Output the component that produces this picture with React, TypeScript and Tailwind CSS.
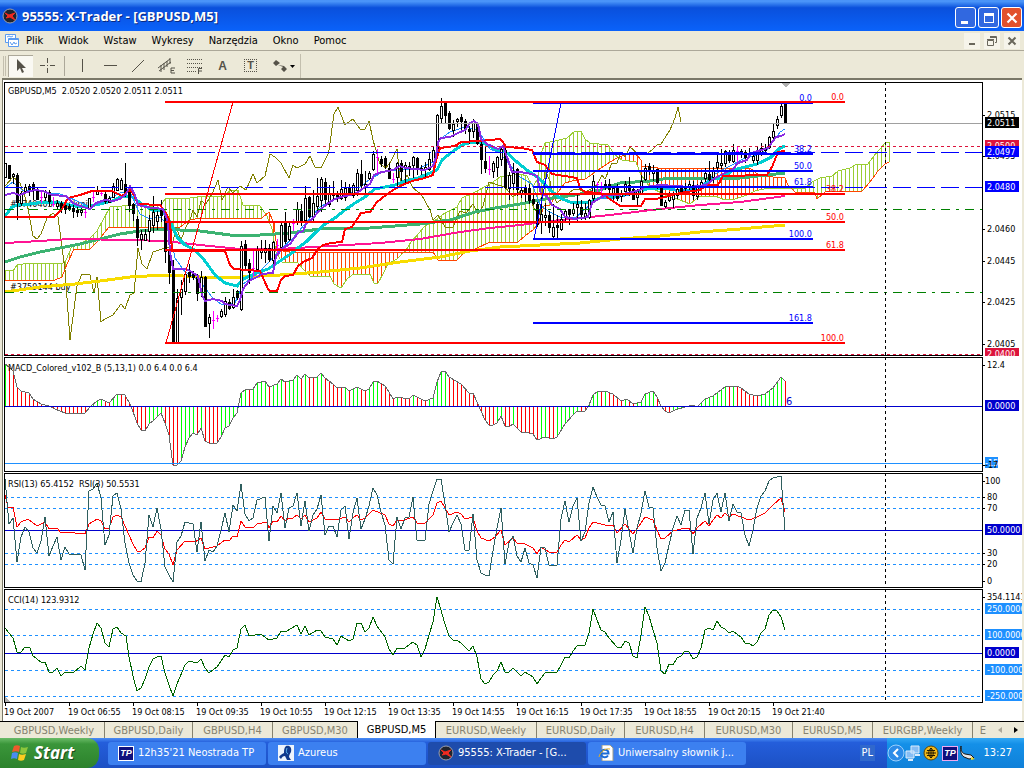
import React from "react";

const CANDLES = `163,163,177,177,w 165,165,178,178,b 173,174,176,183,w 173,175,202,219,b 191,193,203,205,w 184,187,191,193,w 184,186,189,195,b 182,184,190,199,b 187,190,199,199,b 190,197,197,202,m
190,191,197,200,w 190,192,201,205,b 197,204,204,206,m 200,203,206,209,w 201,203,209,212,b 203,205,209,213,b 204,206,209,210,b 205,208,211,217,b 207,210,212,216,b 208,210,212,215,w
210,212,212,217,m 198,198,209,209,w 190,197,197,201,m 186,190,194,194,w 191,193,193,195,m 191,194,201,203,b 196,198,202,202,w 183,186,197,197,w 178,179,190,190,w 178,180,189,189,w
163,184,194,196,b 189,192,205,211,b 203,204,213,220,b 216,219,237,245,b 230,234,239,249,w 229,234,240,240,w 215,220,231,241,w 196,212,225,232,w 211,215,221,229,w 200,208,215,221,b
212,215,251,262,b 250,251,272,283,b 260,270,341,343,b 289,298,343,343,w 280,289,297,314,w 272,274,291,294,w 264,272,276,282,b 271,273,277,279,b 274,277,293,300,b 271,277,292,296,w
276,277,326,326,b 314,317,323,337,w 311,320,320,328,m 315,318,318,321,m 309,311,316,317,w 297,301,314,316,w 299,302,308,309,b 289,297,307,308,w 290,291,297,299,b 241,246,309,310,w
240,244,265,269,b 259,263,272,283,b 251,268,268,276,m 246,250,269,270,w 240,249,252,258,w 240,248,252,262,w 244,248,259,261,b 241,242,260,265,w 239,245,245,255,m 222,225,247,248,w
212,223,241,243,b 223,226,239,240,w 219,223,223,230,m 202,209,222,224,w 204,211,221,225,b 186,198,220,222,w 196,197,216,217,b 190,203,217,220,w 178,196,206,212,w 177,179,200,211,w
178,182,199,203,b 185,194,204,206,w 181,193,195,200,w 191,195,196,201,b 180,189,198,199,w 182,188,197,200,w 184,187,195,195,b 183,185,195,197,w 169,173,190,195,w 160,174,185,188,b
171,184,187,192,w 171,173,178,179,w 151,154,169,170,w 149,157,157,172,m 156,159,163,166,b 156,158,165,168,b 163,168,178,178,b 173,179,179,182,m 162,163,177,187,w 160,163,171,180,b
162,165,168,182,w 162,166,168,175,w 156,157,165,177,w 157,158,169,174,b 165,168,169,174,w 162,167,169,178,w 153,159,169,170,w 146,150,161,165,w 114,115,148,150,w 98,106,118,123,w
101,102,115,122,b 111,113,128,129,b 120,124,130,136,w 118,119,121,126,w 114,117,121,129,b 119,121,129,133,b 126,129,131,143,b 119,121,131,137,w 122,123,143,144,b 138,144,159,173,b
147,161,168,172,b 156,169,169,174,m 161,163,171,177,w 156,157,167,176,w 147,149,159,165,w 148,150,187,188,b 172,175,188,199,w 163,173,183,189,w 168,169,189,195,b 187,190,194,197,w
185,188,192,201,b 184,188,200,203,b 195,199,203,204,b 202,204,224,226,b 197,214,221,233,w 203,215,217,225,w 211,215,227,232,b 204,227,236,239,w 215,225,227,237,b 214,219,229,230,w
210,211,217,222,w 209,209,214,224,b 203,209,213,215,w 195,204,207,222,w 200,207,214,219,b 203,213,217,219,w 199,200,217,218,w 175,181,198,200,w 182,184,184,194,m 182,188,188,195,m
180,184,187,189,b 179,184,189,193,b 186,188,193,199,w 184,188,198,200,b 190,194,196,201,w 181,184,191,195,w 177,185,190,195,b 187,189,199,199,b 189,190,197,205,w 175,181,193,194,w
164,168,179,180,w 163,166,171,174,b 165,170,173,180,w 169,169,182,188,b 184,185,205,205,b 200,202,206,207,w 192,196,200,201,w 192,194,199,207,w 186,189,195,198,w 185,188,191,193,b
183,186,188,190,w 181,184,187,189,w 181,185,195,199,b 184,187,196,199,w 180,182,188,189,w 168,173,178,181,w 161,174,179,180,b 167,170,177,182,w 154,162,167,169,w 149,163,165,168,w
150,151,163,166,w 150,152,160,162,b 144,150,161,162,w 147,151,151,162,m 149,151,152,157,w 150,152,157,162,b 148,153,155,156,b 151,156,160,162,w 146,151,160,164,w 143,148,152,155,w
144,148,150,153,w 136,137,147,148,w 123,131,137,140,w 116,119,125,128,w 104,106,115,117,w 103,103,123,123,b`;

const SPAN_A =
  "5,270 13,271 17,265 30,263 62,264 66,260 72,246 80,244 90,238 97,231 103,220 110,207 135,205 150,207 162,204 165,199 190,198 205,196 225,196 230,190 238,190 243,205 260,206 267,216 272,229 276,252 282,262 297,262 304,270 311,277 330,276 334,284 341,288 347,279 352,275 370,274 374,283 378,283 383,274 388,264 397,259 406,250 411,242 419,233 425,226 437,219 445,213 457,207 462,198 475,192 490,184 500,177 512,175 520,174 527,176 533,187 538,178 541,154 545,143 555,141 567,138 575,131 581,131 585,139 590,143 608,145 615,155 622,160 636,162 641,175 650,187 665,195 680,200 690,204 700,196 715,196 725,200 735,199 747,195 755,191 768,188 785,188 795,189 805,188 812,182 820,178 832,176 838,171 850,168 855,165 868,164 873,157 880,149 885,143 889,142";
const SPAN_B =
  "5,280 55,280 62,277 67,264 74,249 90,249 97,242 109,227 180,227 190,220 200,218 262,218 269,212 274,223 277,250 290,252 433,252 438,260 457,260 464,253 475,249 490,242 518,242 525,236 533,230 538,224 544,206 550,205 558,192 565,183 572,181 585,179 590,176 598,170 607,164 615,159 627,154 635,153 641,160 642,166 658,168 750,168 755,172 760,176 785,178 788,185 795,192 815,193 817,199 825,192 862,191 870,182 878,171 885,164 889,162";

const CHIKOU =
  "5,186 13,177 20,183 27,203 33,236 37,239 41,234 47,218 53,213 58,217 65,270 70,340 77,286 82,274 90,275 94,293 97,277 101,322 105,319 113,315 121,304 125,309 130,295 134,293 138,248 142,264 147,269 153,252 162,249 172,247 176,227 181,240 186,227 190,220 193,210 197,217 201,201 206,204 212,194 218,180 222,200 228,187 233,193 240,186 246,190 253,174 257,183 265,176 270,154 275,157 281,163 289,178 293,165 297,168 305,164 310,156 315,167 321,168 328,154 329,150 334,114 338,107 345,125 353,119 360,129 365,129 369,121 373,140 380,164 386,168 391,161 397,149 401,187 407,175 413,188 421,194 430,210 433,220 438,215 445,227 453,227 460,211 466,213 473,204 478,214 483,206 489,182 495,184 505,187 513,197 522,190 528,194 535,210 540,215 545,170 550,181 553,195 557,203 565,196 573,190 577,189 585,192 593,188 597,185 602,175 605,179 612,163 617,163 621,152 625,157 630,147 637,153 645,155 652,150 657,145 661,144 670,130 675,118 678,107 681,122";

// moving averages, drawn from back to front
const AVERAGES = [
  { color: "#f8dc00", width: 3, points: "5,292 40,287 75,284 100,281 130,277 165,275 200,277 240,277 280,275 320,272 360,268 400,262 440,257 470,251 500,247 540,245 580,243 620,239 660,236 700,232 740,229 785,225" },
  { color: "#3cb371", width: 3, points: "5,262 20,257 40,252 60,248 80,244 100,239 120,234 140,231 160,229 200,231 230,235 260,235 290,233 320,229 370,228 420,224 450,220 475,212 495,208 520,204 545,199 575,195 600,190 620,183 650,181 670,178 740,178 785,173" },
  { color: "#ff1493", width: 2, points: "5,243 40,241 70,239 130,240 165,241 200,245 240,249 280,249 330,246 380,243 420,239 460,232 490,228 520,225 560,220 610,215 660,209 700,205 740,202 785,196" },
  { color: "#00ced1", width: 3, points: "5,216 12,207 22,204 30,204 45,202 60,203 75,206 85,207 100,204 112,201 122,196 132,197 142,204 152,210 160,211 166,215 172,225 177,237 185,245 195,250 205,261 215,275 225,283 237,286 243,279 257,273 268,269 280,261 292,253 298,248 306,242 315,233 325,224 335,218 345,210 355,203 365,197 375,189 385,187 395,185 405,181 418,178 430,173 437,170 442,160 452,152 462,145 472,142 478,142 485,144 495,149 507,153 517,162 528,171 536,176 543,182 550,190 560,198 570,202 580,203 590,202 600,198 615,196 628,194 640,191 650,188 665,188 675,190 690,190 700,188 710,181 715,178 722,178 733,170 745,167 757,164 770,158 780,148 785,146" },
  { color: "#1e90ff", width: 1, points: "5,188 13,182 22,190 32,190 50,193 60,194 75,200 90,207 105,201 120,193 130,192 140,214 150,219 160,217 168,225 175,258 185,272 200,281 212,297 222,305 235,303 243,284 257,274 268,263 280,250 293,238 305,224 320,207 340,196 355,191 370,179 385,171 400,170 420,168 433,162 440,139 450,132 465,127 478,130 490,149 500,153 508,163 520,177 532,184 540,205 548,211 560,217 575,218 590,205 600,198 615,198 630,195 645,187 660,187 675,190 690,190 700,187 715,174 730,166 745,158 757,155 768,149 780,132 785,129" },
  { color: "#ff0000", width: 2, points: "5,217 54,217 62,209 68,198 80,195 92,191 112,191 122,196 130,190 134,195 138,204 160,205 166,213 170,222 172,251 225,251 230,265 234,269 260,271 268,289 270,291 277,291 281,280 285,276 293,275 298,266 303,262 312,258 318,249 323,245 331,243 342,242 345,229 352,227 361,213 370,212 377,202 390,192 400,186 412,181 425,178 433,175 436,160 440,148 455,146 461,142 480,141 500,139 503,142 506,147 521,148 532,150 537,162 545,165 552,174 577,178 580,188 585,192 600,193 610,199 620,206 641,206 645,199 656,199 665,197 680,193 700,190 707,185 718,185 723,176 767,175 772,167 778,152 785,151" },
  { color: "#8a2be2", width: 2, points: "5,195 13,193 20,195 27,192 35,190 43,191 52,195 66,196 73,203 80,206 90,209 96,203 105,200 113,201 120,199 126,194 130,186 135,195 138,205 146,207 163,209 168,222 170,252 173,269 185,269 190,271 198,276 202,295 205,301 213,299 222,301 225,304 237,306 240,300 243,289 249,281 257,277 262,274 273,273 276,256 283,248 290,244 298,233 303,231 306,224 313,218 320,210 327,204 333,200 341,197 350,195 357,193 365,187 370,184 374,175 382,172 393,170 400,166 405,168 425,170 433,166 436,157 438,142 441,138 450,137 458,133 465,130 470,123 474,121 478,124 481,139 487,144 498,149 503,146 508,160 512,172 520,172 532,174 537,176 541,194 547,196 552,205 560,209 565,217 575,219 588,217 592,203 600,198 607,195 618,195 628,193 640,190 645,187 660,185 690,187 706,185 715,178 725,173 733,169 738,163 747,160 751,153 758,151 768,148 776,137 781,136 785,134" },
];

const MACD =
  "5,364 9,367 13,371 17,387 21,391 29,393 33,399 41,404 49,406 55,409 65,413 85,413 90,407 97,401 101,399 109,403 117,394 125,395 131,406 137,423 141,430 145,431 149,424 153,421 161,413 165,423 169,435 173,465 177,465 181,461 185,447 189,438 193,433 197,435 201,428 205,441 209,443 217,443 221,437 225,428 229,426 233,418 237,413 241,393 245,390 253,389 257,383 265,381 269,387 277,384 281,379 285,382 293,380 297,375 301,379 305,374 309,378 317,377 321,373 325,378 333,384 337,388 345,387 349,391 357,387 365,391 369,389 373,382 377,381 385,386 389,392 393,399 397,397 409,399 413,395 425,401 433,398 437,382 441,372 445,371 449,377 461,384 469,393 473,393 477,402 485,420 489,425 493,425 497,423 501,416 505,426 509,427 513,424 521,432 525,432 533,434 537,440 545,437 553,439 557,437 565,424 573,415 577,411 585,411 589,405 593,395 597,392 605,391 613,394 621,401 627,399 633,404 641,402 645,394 653,391 657,397 661,406 665,411 669,413 675,410 685,407 693,405 697,407 705,399 713,396 721,390 725,387 737,386 741,388 749,394 757,396 765,394 773,388 781,377 785,381";
const RSI_FAST =
  "5,479 9,524 13,518 17,562 21,537 25,527 29,532 33,548 37,553 41,541 45,517 49,556 53,546 57,537 61,560 65,547 69,554 81,555 85,570 89,491 93,489 97,483 101,498 105,545 109,535 113,496 117,493 121,509 125,543 129,563 133,575 137,581 141,582 145,563 149,515 153,527 157,508 161,529 165,567 169,575 173,582 177,542 181,536 185,522 193,524 197,552 201,522 205,561 209,550 213,552 217,546 221,530 225,513 229,532 233,505 237,511 241,484 245,514 249,521 253,518 257,500 265,497 269,541 273,506 277,513 281,493 285,528 289,508 293,506 297,493 301,526 305,501 309,531 313,515 317,509 321,495 325,535 329,526 333,526 337,537 341,510 345,506 349,539 353,513 357,498 361,529 365,519 369,506 373,488 377,495 381,512 385,525 389,560 393,564 397,517 401,529 405,518 409,517 413,497 417,540 425,540 429,504 433,491 437,479 441,479 445,504 449,532 453,523 457,515 461,524 465,550 469,550 473,514 477,560 481,573 485,575 489,576 493,551 497,528 501,508 505,564 509,543 513,536 517,556 521,562 525,548 529,563 533,565 537,578 541,547 545,548 549,565 557,565 561,519 565,501 569,522 573,506 577,498 581,541 585,532 589,503 593,487 597,497 601,505 605,506 609,522 613,512 617,563 621,540 625,509 629,531 633,553 637,528 641,513 645,491 649,507 653,508 657,548 661,571 665,563 669,545 673,528 677,516 681,525 685,510 689,510 693,554 697,518 701,508 705,493 709,524 713,500 717,493 721,512 725,493 729,521 733,504 737,512 741,513 745,535 749,546 753,530 757,508 761,496 765,491 769,481 773,478 777,477 781,476 785,530";
const RSI_SLOW =
  "5,495 8,507 13,507 17,527 21,522 28,519 37,526 45,522 49,529 57,528 61,533 65,532 85,534 89,524 97,519 101,521 105,529 109,528 113,517 117,515 121,517 125,526 133,544 137,551 141,551 145,548 149,537 153,538 157,531 161,535 165,549 169,554 173,565 177,550 185,541 195,542 201,538 205,549 217,546 225,540 229,541 233,536 237,537 241,521 245,527 253,528 257,524 267,522 269,528 273,521 277,522 281,516 285,521 289,518 293,518 297,515 301,519 305,515 309,522 317,518 321,512 325,519 337,520 345,517 349,522 353,518 357,515 361,520 365,518 373,510 385,515 389,524 393,526 397,520 401,521 413,517 417,523 425,523 433,515 437,503 441,501 449,515 457,512 461,514 465,519 473,517 477,531 481,538 489,541 495,537 501,530 505,545 513,538 517,543 525,544 533,548 537,554 541,547 549,552 557,552 561,545 565,540 569,542 577,535 581,540 585,538 589,528 593,522 605,525 613,525 617,533 625,524 633,534 641,523 645,517 653,520 657,530 661,539 665,538 673,531 681,529 689,528 693,534 697,528 705,521 709,526 713,520 717,515 721,518 725,513 729,517 733,514 741,517 749,520 757,517 765,513 773,505 781,498 785,512";
const CCI =
  "5,628 13,638 17,652 21,652 25,647 30,648 33,656 41,662 45,662 49,672 53,672 57,668 61,676 65,672 73,673 81,666 85,670 89,648 93,634 97,623 101,628 105,643 109,647 113,629 117,627 121,633 126,636 129,657 133,676 137,691 141,688 145,679 149,667 153,659 157,657 161,656 165,673 169,685 173,696 177,684 185,665 189,661 197,663 201,659 205,668 209,673 217,667 225,655 229,657 233,650 237,648 241,629 245,625 249,636 261,634 269,640 277,638 281,631 285,632 297,625 301,634 305,626 309,635 317,630 321,631 325,637 333,639 337,645 341,636 349,641 353,639 357,623 361,623 365,632 369,628 373,617 377,626 385,637 389,649 393,655 397,648 405,648 413,642 417,645 421,657 425,649 429,635 433,622 437,597 441,610 445,624 449,636 453,640 457,640 461,643 469,651 473,646 477,657 481,679 485,684 489,682 493,675 497,671 501,662 505,672 509,672 513,668 521,676 525,672 533,677 537,684 541,678 545,673 557,672 561,665 565,657 569,658 573,651 577,646 585,645 589,633 593,609 597,620 601,630 605,632 609,638 617,647 621,648 625,641 629,643 633,656 637,658 641,635 645,607 649,616 653,630 657,643 661,671 665,674 669,664 673,665 677,658 681,656 685,651 689,652 693,659 697,657 701,648 705,630 709,628 713,630 717,621 721,627 725,629 729,633 733,631 741,637 745,643 749,643 753,646 757,642 761,633 765,629 769,615 773,610 777,611 781,617 785,630";

const candles = CANDLES.split(/\s+/).map((c) => {
  const [high, top, bottom, low, kind] = c.split(",");
  return { high: +high, top: +top, bottom: +bottom, low: +low, kind };
});

// value of a polyline every 4px, one per bar
const sample = (points: string, end: number) => {
  const list = points.split(" ").map((p) => p.split(",").map(Number));
  const out: number[][] = [];
  for (let x = 5; x <= end; x += 4) {
    let i = 1;
    while (i < list.length - 1 && list[i][0] < x) i++;
    const [x1, y1] = list[i - 1];
    const [x2, y2] = list[i];
    out.push([x, Math.round(y1 + ((y2 - y1) * (x - x1)) / (x2 - x1))]);
  }
  return out;
};

const spanA = sample(SPAN_A, 889);
const spanB = sample(SPAN_B, 889);
const macdBars = sample(MACD, 785);

const redFib = [
  [102, "0.0"],
  [194, "38.2"],
  [222, "50.0"],
  [250, "61.8"],
  [343, "100.0"],
] as const;
const blueFib = [
  [103, "0.0"],
  [154, "38.2"],
  [171, "50.0"],
  [187, "61.8"],
  [239, "100.0"],
  [323, "161.8"],
] as const;

const TEXT = "font-['DejaVu_Sans_Condensed','Noto_Sans',sans-serif] text-[9px]";

function Level({ y, color, dash }: { y: number; color: string; dash?: string }) {
  return (
    <line x1="5" x2="4000" y1={y} y2={y} stroke={color} strokeDasharray={dash} />
  );
}

function Line({ points, color, width = 1 }: any) {
  return (
    <polyline points={points} fill="none" stroke={color} strokeWidth={width} />
  );
}

type Mark = { y: number; text: string; bg?: string; color?: string };

function Panel({ top, height, marks, label, children }: {
  top: number;
  height: string;
  marks: Mark[];
  label: string;
  children: React.ReactNode;
}) {
  return (
    <div className={`flex ${height}`}>
      <div className="min-w-0 flex-1 border border-black">
        <svg className="block h-full w-full" role="img" aria-label={label}>
          <g
            transform={`translate(-5 ${-top - 1})`}
            shapeRendering="crispEdges"
          >
            {children}
            <line
              x1="885"
              x2="885"
              y1={top}
              y2={top + 300}
              stroke="#000"
              strokeDasharray="3 3"
            />
          </g>
        </svg>
      </div>
      <svg className={`block h-full w-[39px] shrink-0 ${TEXT}`}>
        <g transform={`translate(-983 ${-top})`} shapeRendering="crispEdges">
          {marks.map((m) => (
            <g key={m.y}>
              {m.bg ? (
                <rect
                  x="985"
                  y={m.y - 6}
                  width={m.text.length * 7 - 8}
                  height="11"
                  fill={m.bg}
                />
              ) : (
                <line x1="983" x2="985" y1={m.y} y2={m.y} stroke="#000" />
              )}
              <text
                x={m.text.length === 3 ? 985 : 987}
                y={m.y + 3}
                fill={m.color || "#000"}
              >
                {m.text}
              </text>
            </g>
          ))}
        </g>
      </svg>
    </div>
  );
}

function PriceChart() {
  return (
    <Panel
      top={82}
      height="h-[274px]"
      label="GBPUSD M5 price"
      marks={[
        { y: 115, text: "2.0515" },
        { y: 156, text: "2.0495" },
        { y: 146, text: "2.0500", bg: "#dc143c", color: "#fff" },
        { y: 229, text: "2.0460" },
        { y: 261, text: "2.0445" },
        { y: 302, text: "2.0425" },
        { y: 344, text: "2.0405" },
        { y: 354, text: "2.0400", bg: "#dc143c", color: "#fff" },
        { y: 123, text: "2.0511", bg: "#000", color: "#fff" },
        { y: 152, text: "2.0497", bg: "#0000ff", color: "#fff" },
        { y: 187, text: "2.0480", bg: "#0000ff", color: "#fff" },
      ]}
    >
      <g className={TEXT}>
        <text x="10" y="207">#3740403 buy limit</text>
        <text x="10" y="290">#3759144 buy</text>
      </g>

      {/* cloud */}
      {spanA.map(([x, y], i) => (
        <line
          key={x}
          x1={x}
          x2={x}
          y1={y}
          y2={spanB[i][1]}
          stroke={y < spanB[i][1] ? "#9acd32" : "#ff4500"}
        />
      ))}
      <Line points={SPAN_A} color="#9acd32" />
      <Line points={SPAN_B} color="#ff4500" />
      <line x1="889" x2="889" y1="142" y2="162" stroke="#9acd32" />
      <Line points={CHIKOU} color="#808000" />

      {AVERAGES.slice(0, 5).map((a) => (
        <Line key={a.color} {...a} />
      ))}

      {candles.map((c, i) => {
        const x = 5 + i * 4;
        const color = c.kind === "m" ? "#ff00ff" : "#000";
        return (
          <g key={i} fill={color}>
            <rect x={x} y={c.high} width="1" height={c.low - c.high + 1} />
            <rect
              x={x - 1}
              y={c.top}
              width="3"
              height={c.bottom - c.top + 1}
            />
            {c.kind === "w" && c.bottom - c.top > 1 && (
              <rect
                x={x}
                y={c.top + 1}
                width="1"
                height={c.bottom - c.top - 1}
                fill="#fff"
              />
            )}
          </g>
        );
      })}

      {AVERAGES.slice(5).map((a) => (
        <Line key={a.color} {...a} />
      ))}

      <Level y={123} color="#a0a0a0" />
      <Level y={146} color="#dc143c" dash="3 3" />
      <Level y={152} color="#0000ff" dash="18 6" />
      <Level y={187} color="#0000ff" dash="18 6" />
      <Level y={209} color="#008000" dash="9 6 3 6" />
      <Level y={292} color="#008000" dash="9 6 3 6" />
      <Level y={354} color="#dc143c" dash="3 3" />

      <g className={TEXT} textAnchor="end">
        {blueFib.map(([y, text]) => (
          <g key={y}>
            <line x1="533" x2="813" y1={y} y2={y} stroke="#00f" strokeWidth="2" />
            <text x="812" y={y - 2} fill="#00f">{text}</text>
          </g>
        ))}
        {redFib.map(([y, text]) => (
          <g key={y}>
            <line x1="165" x2="845" y1={y} y2={y} stroke="#f00" strokeWidth="2" />
            <text x="844" y={y - 2} fill="#f00">{text}</text>
          </g>
        ))}
      </g>
      <line x1="166" y1="343" x2="233" y2="102" stroke="#f00" />
      <line x1="534" y1="239" x2="561" y2="103" stroke="#00f" />
      <path d="M781 83h9l-4 5z" fill="#b0b0b0" />
      <text x="8" y="94" className={`${TEXT} whitespace-pre`}>
        {"GBPUSD,M5  2.0520 2.0520 2.0511 2.0511"}
      </text>
    </Panel>
  );
}

function MacdChart() {
  return (
    <Panel
      top={357}
      height="h-[115px]"
      label="MACD"
      marks={[
        { y: 365, text: "12.4" },
        { y: 406, text: "0.0000", bg: "#0000cd", color: "#fff" },
        { y: 463, text: "-15", bg: "#1e90ff", color: "#fff" },
        { y: 465, text: "-17" },
      ]}
    >
      {macdBars.map(([x, y], i) => (
        <line
          key={x}
          x1={x}
          x2={x}
          y1={y}
          y2="406"
          stroke={i === 0 || y < macdBars[i - 1][1] ? "#00ff00" : "#ff0000"}
        />
      ))}
      <Line points={MACD} color="#696969" />
      <Level y={406} color="#0000cd" />
      <Level y={463} color="#1e90ff" />
      <text x="8" y="371" className={TEXT}>
        MACD_Colored_v102_B (5,13,1) 0.0 6.4 0.0 6.4
      </text>
      <text
        x="786"
        y="405"
        fill="#0000cd"
        className="font-['DejaVu_Sans_Condensed','Noto_Sans',sans-serif] text-[11px]"
      >
        6
      </text>
    </Panel>
  );
}

function RsiChart() {
  return (
    <Panel
      top={473}
      height="h-[115px]"
      label="RSI"
      marks={[
        { y: 481, text: "100" },
        { y: 497, text: "80" },
        { y: 508, text: "70" },
        { y: 530, text: "50.0000", bg: "#0000cd", color: "#fff" },
        { y: 553, text: "30" },
        { y: 564, text: "20" },
        { y: 581, text: "0" },
      ]}
    >
      {[497, 508, 553, 564].map((y) => (
        <Level key={y} y={y} color="#1e90ff" dash="3 3" />
      ))}
      <Level y={530} color="#0000cd" />
      <Line points={RSI_SLOW} color="#ff0000" />
      <Line points={RSI_FAST} color="#2f5f5f" />
      <text x="8" y="487" className={`${TEXT} whitespace-pre`}>
        {"RSI(13) 65.4152  RSI(3) 50.5531"}
      </text>
    </Panel>
  );
}

function CciChart() {
  return (
    <Panel
      top={589}
      height="h-[114px]"
      label="CCI"
      marks={[
        { y: 597, text: "354.1141" },
        { y: 609, text: "250.0000", bg: "#1e90ff", color: "#fff" },
        { y: 635, text: "100.0000", bg: "#1e90ff", color: "#fff" },
        { y: 653, text: "0.0000", bg: "#0000cd", color: "#fff" },
        { y: 670, text: "-100.0000", bg: "#1e90ff", color: "#fff" },
        { y: 696, text: "-250.0000", bg: "#1e90ff", color: "#fff" },
      ]}
    >
      {[609, 635, 670, 696].map((y) => (
        <Level key={y} y={y} color="#1e90ff" dash="3 3" />
      ))}
      <Level y={653} color="#0000cd" />
      <Line points={CCI} color="#006400" />
      <path d="M5 697l5 5h-5z" fill="#b0b0b0" />
      <text x="8" y="603" className={TEXT}>
        CCI(14) 123.9312
      </text>
    </Panel>
  );
}

function TraderIcon() {
  return (
    <svg className="h-4 w-4 shrink-0" viewBox="0 0 16 16">
      <circle cx="8" cy="8" r="7" fill="#20242e" stroke="#9a9fae" />
      <path
        d="M3 5l4 2 6-2-3 3 3 4-5-3-4 1 2-2z"
        fill="#f02a20"
        stroke="#f02a20"
      />
    </svg>
  );
}

function TitleBar() {
  const box =
    "flex h-[21px] w-[21px] items-center justify-center rounded-[3px] border border-white";
  return (
    <header className="flex h-[31px] items-center bg-linear-to-b from-[#4a94f8] from-5% via-[#0a50dc] via-25% to-[#0a62fa] px-[2px]">
      <TraderIcon />
      <h1 className="ml-1 flex-1 pt-[2px] font-['Open_Sans','Noto_Sans',sans-serif] text-[13px] font-bold text-white [text-shadow:1px_1px_#0a2a80]">
        95555: X-Trader - [GBPUSD,M5]
      </h1>
      <div className="mt-1 flex gap-[2px]">
        <button aria-label="Minimalizuj" className={`${box} bg-[#3168e0]`}>
          <svg className="h-4 w-4" viewBox="0 0 16 16">
            <path d="M3 11h7v3H3z" fill="#fff" />
          </svg>
        </button>
        <button aria-label="Maksymalizuj" className={`${box} bg-[#3168e0]`}>
          <svg className="h-4 w-4" viewBox="0 0 16 16">
            <path d="M3 3h10v10H3zM4 6v6h8V6z" fill="#fff" fillRule="evenodd" />
          </svg>
        </button>
        <button aria-label="Zamknij" className={`${box} bg-[#e2512c]`}>
          <svg className="h-4 w-4" viewBox="0 0 16 16">
            <path d="M3.500 3.500l9 9m0-9l-9 9" stroke="#fff" strokeWidth="2.200" />
          </svg>
        </button>
      </div>
    </header>
  );
}

function MenuBar() {
  return (
    <nav className="flex h-5 items-center border-b border-[#aca899] pr-1 pl-[5px]">
      <svg className="mr-[3px] h-4 w-[15px]" viewBox="0 0 15 16">
        <g fill="#fff" stroke="#5b9bf0">
          <path d="M.5 1.500h10v8H.5z" />
          <path d="M3.500 5.500h10v8h-10z" />
          <path d="M3 6.500h11M5 9l2 3 2-3 1 2 2-1M2 4l2-1 2 1 2-1" fill="none" />
        </g>
      </svg>
      {["Plik", "Widok", "Wstaw", "Wykresy", "Narzędzia", "Okno", "Pomoc"].map(
        (item, i) => (
          <button
            key={i}
            className="mr-[9px] px-[3px] text-[11px] leading-4 whitespace-nowrap"
          >
            {item}
          </button>
        )
      )}
      <div className="ml-auto flex gap-1 text-[#6a675c]">
        <button aria-label="Minimalizuj wykres" className="h-4 w-4 bg-[#f6f4ea]">
          <svg viewBox="0 0 16 16">
            <path d="M5 10h6v2H5z" fill="currentColor" />
          </svg>
        </button>
        <button aria-label="Przywróć wykres" className="h-4 w-4 bg-[#f6f4ea]">
          <svg viewBox="0 0 16 16" fill="none" stroke="currentColor">
            <path d="M3.500 7.500h6v5h-6zM3 6.500h7M6 3.500h6.500v6H11M6 4.500h6" />
          </svg>
        </button>
        <button aria-label="Zamknij wykres" className="h-4 w-4 bg-[#f6f4ea]">
          <svg viewBox="0 0 16 16">
            <path d="M4.500 4.500l7 7m0-7l-7 7" stroke="currentColor" strokeWidth="2" />
          </svg>
        </button>
      </div>
    </nav>
  );
}

const tools = [
  {
    name: "Kursor",
    art: <path d="M5 2v12l3-3 2 5 2-1-2-4h4z" fill="currentColor" stroke="none" />,
  },
  { name: "Celownik", art: <path d="M8.500 2v5m0 5v5M1 9.500h5m5 0h5M8 9.500h1" /> },
  { name: "Linia pionowa", art: <path d="M9.500 3v13" /> },
  { name: "Linia pozioma", art: <path d="M3 9.500h13" /> },
  { name: "Linia trendu", art: <path d="M3 16L15 4" /> },
  {
    name: "Kanał",
    art: <path d="M1 12L13 3M2 15L14 6M4 9v7m3-9v7m3-9v6m3-9v6M18 12h-4v5h4m-4-2.500h3" />,
  },
  {
    name: "Fibonacci",
    art: (
      <>
        <path d="M2 3.500h15M2 7.500h15M2 11.500h15M2 15.500h9" strokeDasharray="1 1" />
        <path d="M17 12.500h-3.500V18m0-3H17" />
      </>
    ),
  },
];

function ToolBar() {
  return (
    <div className="flex h-[27px] items-center pt-[2px] pl-[3px] text-[#555248]">
      <div className="mr-[2px] h-5 w-[3px] border-x border-[#c3bfae]" />
      {tools.map((t, i) => (
        <React.Fragment key={t.name}>
          <button
            aria-label={t.name}
            className={`mr-[3px] flex h-[22px] w-[25px] items-center justify-center ${
              i === 0 ? "border-t border-l border-[#aca899] bg-[#faf9f3]" : ""
            }`}
          >
            <svg
              className="h-[19px] w-[19px]"
              viewBox="0 0 19 19"
              fill="none"
              stroke="currentColor"
            >
              {t.art}
            </svg>
          </button>
          {i === 1 && <div className="mr-[5px] h-5 w-px bg-[#aca899]" />}
        </React.Fragment>
      ))}
      <button className="mr-[3px] h-[22px] w-[25px] font-['Liberation_Sans',sans-serif] text-xs font-bold">
        A
      </button>
      <button className="mr-1 flex h-[22px] w-[25px] items-center justify-center font-['Liberation_Sans',sans-serif]">
        <span className="h-[13px] w-[13px] border border-dotted border-[#555248] text-[11px] leading-[11px] font-bold">
          T
        </span>
      </button>
      <button
        aria-label="Strzałki"
        className="flex h-[22px] w-[33px] items-center justify-center"
      >
        <svg className="h-4 w-6" viewBox="0 0 24 16">
          <path
            d="M4 2l4 3-4 3-3-3zM6 7l6 1 2 2M12 8l3 3-3 3-3-3z"
            fill="currentColor"
          />
          <path d="M18 7h5l-2.500 3z" fill="#000" />
        </svg>
      </button>
      <div className="h-6 w-px bg-[#c3bfae]" />
    </div>
  );
}

const times = [
  "19 Oct 2007",
  "19 Oct 06:55",
  "19 Oct 08:15",
  "19 Oct 09:35",
  "19 Oct 10:55",
  "19 Oct 12:15",
  "19 Oct 13:35",
  "19 Oct 14:55",
  "19 Oct 16:15",
  "19 Oct 17:35",
  "19 Oct 18:55",
  "19 Oct 20:15",
  "19 Oct 21:40",
];

const tabs = [
  { name: "GBPUSD,Weekly", width: "w-[101px]" },
  { name: "GBPUSD,Daily", width: "w-[88px]" },
  { name: "GBPUSD,H4", width: "w-[80px]" },
  { name: "GBPUSD,M30", width: "w-[84px]" },
  { name: "GBPUSD,M5", width: "w-[79px]", active: true },
  { name: "EURUSD,Weekly", width: "w-[101px]" },
  { name: "EURUSD,Daily", width: "w-[88px]" },
  { name: "EURUSD,H4", width: "w-[80px]" },
  { name: "EURUSD,M30", width: "w-[88px]" },
  { name: "EURUSD,M5", width: "w-[80px]" },
  { name: "EURGBP,Weekly", width: "w-[100px]" },
];

function ChartTabs() {
  return (
    <div className="flex h-[17px] border-t border-black pl-1 text-[11px] leading-[18px] text-[#85826f]">
      {tabs.map((tab, i) => (
        <button
          key={tab.name}
          className={`${tab.width} shrink-0 text-center whitespace-nowrap ${
            tab.active
              ? "-mt-px border-x border-black bg-white text-black"
              : i === 3
                ? ""
                : "border-r border-[#85826f]"
          }`}
        >
          {tab.name}
        </button>
      ))}
      <button className="w-5 shrink-0">E</button>
      <div className="ml-auto flex items-center gap-3 pr-[6px]">
        <button aria-label="Poprzednie">
          <svg className="block h-2 w-1" viewBox="0 0 4 8">
            <path d="M4 1v6L0 4z" fill="#aca899" />
          </svg>
        </button>
        <button aria-label="Następne">
          <svg className="block h-2 w-1" viewBox="0 0 4 8">
            <path d="M0 1v6l4-3z" fill="#000" />
          </svg>
        </button>
      </div>
    </div>
  );
}

function TpIcon({ frame }: { frame: string }) {
  return (
    <span
      className={`flex h-[15px] w-4 shrink-0 items-center justify-center border bg-[#10107c] font-['Liberation_Sans',sans-serif] text-[9px] leading-3 font-bold text-white italic ${frame}`}
    >
      TP
    </span>
  );
}

const tasks = [
  { title: "12h35'21 Neostrada TP", icon: <TpIcon frame="border-white" /> },
  {
    title: "Azureus",
    icon: (
      <svg className="h-4 w-4 shrink-0" viewBox="0 0 16 16">
        <path d="M0 0h16v16H0z" fill="#eef4fc" />
        <path d="M8 1c4-1 6 2 5 6-1 2-2 3-2 5l2 3H9l-2-4c-2 0-3 1-4 3l-2-2c1-2 3-3 5-4 0-3 0-5 2-7z" fill="#123a8c" />
        <path d="M9 3c-1 3-1 5 1 6" fill="none" stroke="#5ab0e8" />
      </svg>
    ),
  },
  { title: "95555: X-Trader - [G...", icon: <TraderIcon />, active: true },
  {
    title: "Uniwersalny słownik j...",
    icon: (
      <svg className="h-4 w-4 shrink-0" viewBox="0 0 16 16">
        <path d="M4 0h8l3 3v13H4z" fill="#fff" stroke="#9a9a8a" />
        <path d="M2.500 8.500h8c0-5-7-5-7.500 0 0 4 5 5 7 2" fill="none" stroke="#1c6cd8" strokeWidth="2" />
        <path d="M1 12C2 7 7 3 12 4" fill="none" stroke="#e8b020" />
      </svg>
    ),
  },
];

function TaskBar() {
  return (
    <footer className="flex h-[30px] items-stretch bg-linear-to-b from-[#4a8cf4] via-[#245edb] via-15% to-[#1c50c4] text-[11px] text-white">
      <button className="flex w-[99px] shrink-0 items-center gap-[5px] rounded-r-xl bg-linear-to-b from-[#6abc68] via-[#3a963a] via-20% to-[#2c822c] pl-[11px]">
        <svg className="h-[18px] w-[18px]" viewBox="0 0 18 18">
          <path d="M3 2c2-1 4-1 6 0L8 8C6 7 4 7 1 8z" fill="#ee5a2c" />
          <path d="M10 3c2 1 4 1 7 0l-2 6c-2 1-4 1-6 0z" fill="#8cc63c" />
          <path d="M1 9c2-1 4-1 6 0l-1 6c-2-1-4-1-6 0z" fill="#4a8cf0" />
          <path d="M8 10c2 1 4 1 7 0l-2 6c-2 1-4 1-6 0z" fill="#fccc20" />
        </svg>
        <span className="font-['Open_Sans','Noto_Sans',sans-serif] text-[17px] leading-5 font-bold italic [text-shadow:1px_1px_#1c4c1c]">
          Start
        </span>
      </button>
      <div className="ml-[9px] flex min-w-0 items-center gap-[2px]">
        {tasks.map((task) => (
          <button
            key={task.title}
            className={`flex h-[23px] w-[158px] min-w-0 items-center gap-1 rounded-[3px] pl-[10px] whitespace-nowrap ${
              task.active ? "bg-[#1e4cac]" : "bg-[#3c80f0]"
            }`}
          >
            {task.icon}
            {task.title}
          </button>
        ))}
      </div>
      <span className="mr-3 ml-auto self-center bg-[#3068cc] px-[2px]">PL</span>
      <div className="flex w-[137px] shrink-0 items-center bg-linear-to-b from-[#30a8f4] via-[#1490e8] via-20% to-[#1080d8]">
        <button aria-label="Pokaż ukryte ikony">
          <svg className="block h-[18px] w-[18px]" viewBox="0 0 18 18">
            <circle cx="9" cy="9" r="8" fill="#2c8ce8" stroke="#9cd0fc" />
            <path d="M11 5L7 9l4 4" fill="none" stroke="#fff" strokeWidth="2" />
          </svg>
        </button>
        <svg className="h-4 w-4" viewBox="0 0 16 16">
          <path d="M6 1h8v7H6zM1 6h8v7H1z" fill="#86bdf4" stroke="#dcecfc" />
          <path d="M3 15h5M10 10h5" stroke="#dcecfc" strokeWidth="2" />
        </svg>
        <svg className="ml-[2px] h-4 w-4" viewBox="0 0 16 16">
          <circle cx="8" cy="8" r="7" fill="#f0b818" stroke="#5c4408" />
          <path
            d="M3 8h10M8 3v10M4 5.500h8M4 10.500h8M8 3c-3 3-3 7 0 10 3-3 3-7 0-10"
            fill="none"
            stroke="#201800"
          />
        </svg>
        <span className="ml-[3px]">
          <TpIcon frame="border-[#f0a8f0]" />
        </span>
        <svg className="ml-[2px] h-4 w-4" viewBox="0 0 16 16">
          <path d="M1 1c0 5 1 7 4 8l6 1 3 3-5 1-5-2C1 10 0 6 1 1z" fill="#e8e8e8" stroke="#181818" />
          <path d="M11 12l4 2-4 1z" fill="#f8e020" />
        </svg>
        <span className="mr-3 ml-auto">13:27</span>
      </div>
    </footer>
  );
}

export default function App() {
  return (
    <div className="flex min-h-screen flex-col bg-[#ece9d8] font-['DejaVu_Sans_Condensed','Noto_Sans',sans-serif] text-black">
      <TitleBar />
      <MenuBar />
      <ToolBar />
      <main className="flex flex-1 flex-col">
        <div className="ml-[2px] mr-[2px] flex flex-1 flex-col border-t-2 border-l border-[#7a7868] bg-white pt-[2px] pl-px">
          <div className="flex flex-col gap-px">
            <PriceChart />
            <MacdChart />
            <RsiChart />
            <CciChart />
          </div>
          <div className={`flex overflow-hidden ${TEXT}`}>
            {times.map((time) => (
              <div key={time} className="w-16 shrink-0 whitespace-nowrap">
                <div className="ml-px h-[3px] w-px bg-black" />
                <div className="leading-3">{time}</div>
              </div>
            ))}
          </div>
        </div>
        <ChartTabs />
      </main>
      <TaskBar />
    </div>
  );
}
